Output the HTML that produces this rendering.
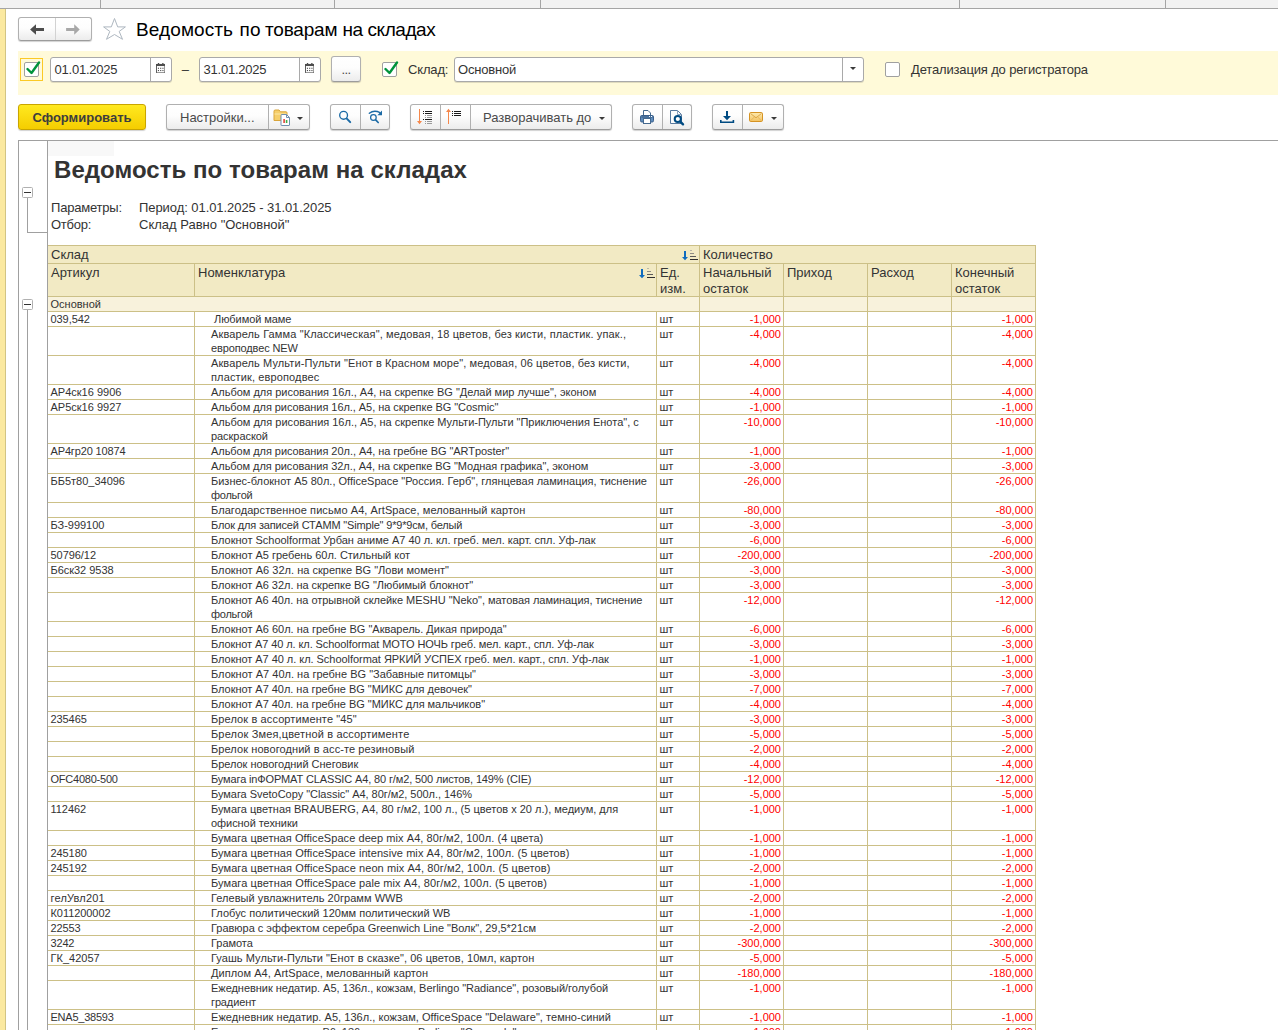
<!DOCTYPE html>
<html lang="ru">
<head>
<meta charset="utf-8">
<title>Ведомость по товарам на складах</title>
<style>
*{box-sizing:border-box;margin:0;padding:0}
html,body{width:1278px;height:1030px;overflow:hidden;background:#fff}
body{font-family:"Liberation Sans",sans-serif;font-size:13px;color:#333;position:relative}
.abs{position:absolute}
/* top strip */
#tabs{left:0;top:0;width:1278px;height:9px;background:#f2f2f2;border-bottom:1px solid #a5a5a5}
#tabs i{position:absolute;top:0;width:1px;height:8px;background:#a5a5a5}
#lstrip{left:0;top:9px;width:6px;height:1021px;background:#fbe9a0;border-right:1px solid #d2c483}
/* nav */
.btn{position:absolute;height:26px;border:1px solid #b0b0b0;border-bottom-color:#9c9c9c;border-radius:3px;background:linear-gradient(#ffffff 0%,#fdfdfd 45%,#ececec 100%);box-shadow:0 1px 1px rgba(0,0,0,.18);font-size:13px;color:#4a4a4a;line-height:25px;white-space:nowrap}
.btn .sep{position:absolute;top:0;width:1px;height:24px;background:#b0b0b0}
#title{left:136px;top:18px;font-size:19px;line-height:24px;color:#000;white-space:nowrap}
#band{left:18px;top:51px;width:1260px;height:44px;background:#fffad9}
.inp{position:absolute;height:25px;border:1px solid #a9a9a9;border-radius:3px;background:#fff;font-size:13px;line-height:23px;color:#333;white-space:nowrap;box-shadow:0 1px 0 rgba(0,0,0,.12)}
.inp .sep{position:absolute;top:0;width:1px;height:23px;background:#a9a9a9}
.chk{position:absolute;width:15px;height:15px;border:1px solid #a0a0a0;border-radius:2px;background:#fff}
.lbl{position:absolute;font-size:13px;line-height:16px;white-space:nowrap;color:#333}
/* report */
#frame{left:18px;top:140px;width:1260px;height:890px;border-left:1px solid #a0a0a0;border-top:1px solid #a0a0a0;background:#fff}
#gline{left:47px;top:141px;width:1px;height:889px;background:#a0a0a0}
.mbox{position:absolute;width:11px;height:11px;border:1px solid #b0b0b0;border-radius:1.5px;background:#fff}
.mbox:after{content:"";position:absolute;left:1px;top:4px;width:7px;height:1px;background:#333}
.gl{position:absolute;background:#a0a0a0}
#rtitle{left:54px;top:156px;letter-spacing:0.05px;font-size:24px;line-height:28px;font-weight:bold;color:#333;white-space:nowrap}
.p{position:absolute;font-size:13px;line-height:16px;color:#333;white-space:nowrap}
/* table */
#tbl{left:48px;top:245px;width:988px;font-size:11px;line-height:14px;color:#333}
.sp{display:inline-block;width:3px}
.h1,.h2,.g,.r,.r2{position:relative;width:988px;border-bottom:1px solid #ccc087}
.h1{height:19px;border-top:1px solid #ccc087;background:#f2eac4}
.h2{height:33px;background:#f2eac4}
.g{height:15px;background:#f8f2dc}
.r{height:15px}
.r2{height:29px}
.c{position:absolute;top:0;bottom:0;border-left:1px solid #ccc087;white-space:nowrap;overflow:hidden;padding:0 0 0 2.5px}
.h1 .c,.h2 .c{font-size:13px;line-height:16px;padding:1px 0 0 3px}
.a{left:0;width:146px;border-left:none}
.n{left:146px;width:462px;padding-left:16px}
.u{left:608px;width:43px}
.q1{left:651px;width:84px}
.q2{left:735px;width:84px}
.q3{left:819px;width:84px}
.q4{left:903px;width:85px;border-right:1px solid #ccc087}
.r .q1,.r .q4,.r2 .q1,.r2 .q4{text-align:right;color:#ff0000;padding-right:2px}
</style>
</head>
<body>
<div id="tabs" class="abs"><i style="left:100px"></i><i style="left:334px"></i><i style="left:540px"></i><i style="left:959px"></i><i style="left:1165px"></i></div>
<div id="lstrip" class="abs"></div>

<!-- nav buttons -->
<div class="btn" style="left:18px;top:17px;width:74px;height:24px">
  <span class="sep" style="left:36px;height:22px;background:#d2d2d2"></span>
  <svg class="abs" style="left:11px;top:5px" width="15" height="13" viewBox="0 0 15 13"><path d="M0.100 6.500 L6 1.200 L6 5 L14 5 L14 8 L6 8 L6 11.700 Z" fill="#4d4d4d"/></svg>
  <svg class="abs" style="left:47px;top:5px" width="15" height="13" viewBox="0 0 15 13"><path d="M13.700 6.500 L8.200 1.200 L8.200 5 L0.100 5 L0.100 8 L8.200 8 L8.200 11.700 Z" fill="#a8a8a8"/></svg>
</div>
<svg class="abs" style="left:102px;top:17px" width="25" height="24" viewBox="0 0 25 24"><path d="M12.5 1.5 L15.7 9.9 L23.4 9.9 L17.2 14.4 L20.5 22.3 L12.5 17.5 L4.5 22.3 L7.8 14.4 L1.6 9.9 L9.3 9.9 Z" fill="#fff" stroke="#aeb7c0" stroke-width="1" stroke-linejoin="miter"/></svg>
<div id="title" class="abs"><span class="abs" style="left:0;letter-spacing:0.1px">Ведомость</span><span class="abs" style="left:103.6px">по</span><span class="abs" style="left:129px;letter-spacing:-0.2px">товарам</span><span class="abs" style="left:206.5px;letter-spacing:-0.5px">на</span><span class="abs" style="left:231.5px;letter-spacing:-0.45px">складах</span></div>

<!-- params band -->
<div id="band" class="abs"></div>
<div class="abs" style="left:20px;top:58px;width:23px;height:23px;border:1px solid #fbc926"></div>
<div class="chk" style="left:24px;top:62px"></div>
<svg class="abs" style="left:26px;top:61px" width="15" height="15" viewBox="0 0 15 15"><path d="M1.5 8 L5.5 12 L13 1.5" fill="none" stroke="#00933b" stroke-width="2.4" stroke-linecap="round" stroke-linejoin="round"/></svg>
<div class="inp" style="left:50px;top:57px;width:122px"><span class="abs" style="left:3.5px;top:0;letter-spacing:-0.22px">01.01.2025</span><span class="sep" style="left:99px"></span><svg class="abs" style="left:105px;top:5px" width="9.4" height="10.4" viewBox="0 0 10 11"><path d="M0.5 1.5h9v9h-9z" fill="#fff" stroke="#4d4d4d"/><path d="M0 1h10v2.2H0z" fill="#4d4d4d"/><path d="M2 0h1.4v2H2zM6.6 0H8v2H6.6z" fill="#4d4d4d"/><path d="M2.2 2.2h1v.8h-1zM6.8 2.2h1v.8h-1z" fill="#fff" opacity=".0"/><g fill="#4d4d4d"><rect x="2" y="5" width="1.2" height="1.2"/><rect x="4.4" y="5" width="1.2" height="1.2"/><rect x="6.8" y="5" width="1.2" height="1.2"/><rect x="2" y="7.4" width="1.2" height="1.2"/><rect x="4.4" y="7.4" width="1.2" height="1.2"/><rect x="6.8" y="7.4" width="1.2" height="1.2"/></g></svg></div>
<div class="lbl" style="left:181.7px;top:62px">–</div>
<div class="inp" style="left:199px;top:57px;width:122px"><span class="abs" style="left:3.5px;top:0;letter-spacing:-0.22px">31.01.2025</span><span class="sep" style="left:99px"></span><svg class="abs" style="left:105px;top:5px" width="9.4" height="10.4" viewBox="0 0 10 11"><path d="M0.5 1.5h9v9h-9z" fill="#fff" stroke="#4d4d4d"/><path d="M0 1h10v2.2H0z" fill="#4d4d4d"/><path d="M2 0h1.4v2H2zM6.6 0H8v2H6.6z" fill="#4d4d4d"/><path d="M2.2 2.2h1v.8h-1zM6.8 2.2h1v.8h-1z" fill="#fff" opacity=".0"/><g fill="#4d4d4d"><rect x="2" y="5" width="1.2" height="1.2"/><rect x="4.4" y="5" width="1.2" height="1.2"/><rect x="6.8" y="5" width="1.2" height="1.2"/><rect x="2" y="7.4" width="1.2" height="1.2"/><rect x="4.4" y="7.4" width="1.2" height="1.2"/><rect x="6.8" y="7.4" width="1.2" height="1.2"/></g></svg></div>
<div class="btn" style="left:331px;top:56px;width:30px;text-align:center;letter-spacing:-0.6px">...</div>
<div class="chk" style="left:382px;top:62px"></div>
<svg class="abs" style="left:384px;top:61px" width="15" height="15" viewBox="0 0 15 15"><path d="M1.5 8 L5.5 12 L13 1.5" fill="none" stroke="#00933b" stroke-width="2.4" stroke-linecap="round" stroke-linejoin="round"/></svg>
<div class="lbl" style="left:408px;top:62px;letter-spacing:-0.15px">Склад:</div>
<div class="inp" style="left:454px;top:57px;width:410px"><span class="abs" style="left:3px;top:0;letter-spacing:-0.2px">Основной</span><span class="sep" style="left:387px"></span>
  <svg class="abs" style="left:395px;top:9px" width="6" height="3" viewBox="0 0 6 3"><path d="M0 0H6L3 3Z" fill="#3a3a3a"/></svg></div>
<div class="chk" style="left:885px;top:62px"></div>
<div class="lbl" style="left:911px;top:62px;letter-spacing:-0.155px">Детализация до регистратора</div>

<!-- toolbar -->
<div class="btn" style="left:18px;top:104px;width:128px;background:linear-gradient(#ffe920,#f5cd00);border-color:#c9a500;font-weight:bold;text-align:center;color:#3d3d3d">Сформировать</div>
<div class="btn" style="left:166px;top:104px;width:144px"><span class="abs" style="left:13px;top:0">Настройки...</span><span class="sep" style="left:101px"></span><svg class="abs" style="left:106px;top:4px" width="18" height="17" viewBox="0 0 18 17"><path d="M1 2.2 Q1 1 2.2 1 H6 L7.5 2.8 H13 Q14 2.8 14 3.8 V11.5 H1z" fill="#f6cf6a" stroke="#d9a53a" stroke-width="1"/><path d="M1.5 5h12" stroke="#fbe7a8" stroke-width="1"/><path d="M8.5 5.5h5l3 3v7.5q0 .5-.5.5h-7.5q-.5 0-.5-.5v-9.500q0-.5.500-.5z" fill="#fff" stroke="#6f8fae" stroke-width="1"/><path d="M13.500 5.500v3h3" fill="none" stroke="#6f8fae" stroke-width="1"/><rect x="10.300" y="10" width="1.600" height="4" fill="#e0453a"/><rect x="12.800" y="11" width="1.600" height="3" fill="#3fae49"/></svg>
  <svg class="abs" style="left:130px;top:12px" width="6" height="3" viewBox="0 0 6 3"><path d="M0 0H6L3 3Z" fill="#3a3a3a"/></svg></div>
<div class="btn" style="left:330px;top:104px;width:60px"><span class="sep" style="left:29px"></span><svg class="abs" style="left:0;top:0" width="58" height="24" viewBox="0 0 58 24"><g fill="none" stroke="#1b6aa5" stroke-linecap="round"><circle cx="12.600" cy="10.300" r="3.900" stroke-width="1.350"/><path d="M15.800 13.600L19.200 17.100" stroke-width="2"/><circle cx="42.400" cy="12.500" r="2.800" stroke-width="1.250"/><path d="M44.700 14.900L47.200 17.500" stroke-width="1.700"/><path d="M38.300 8.300Q43 4.500 49 7.600" stroke-width="1.350"/></g><path d="M51 5.500v4.800h-4.600z" fill="#1b6aa5"/></svg></div>
<div class="btn" style="left:410px;top:104px;width:202px"><span class="sep" style="left:29px"></span><span class="sep" style="left:59px"></span><svg class="abs" style="left:0;top:0" width="60" height="24" viewBox="0 0 60 24"><path d="M8 4h1v12h2l-2.500 3.200l-2.500-3.200h2z" fill="#f5874a"/><rect x="12" y="6" width="1" height="1" fill="#1a1a1a"/><rect x="14" y="6" width="7" height="1" fill="#1a1a1a"/><rect x="12" y="8" width="1" height="1" fill="#1a1a1a"/><rect x="14" y="8" width="7" height="1" fill="#1a1a1a"/><rect x="14" y="10" width="1" height="1" fill="#9a9a9a"/><rect x="16" y="10" width="5" height="1" fill="#9a9a9a"/><rect x="14" y="12" width="1" height="1" fill="#9a9a9a"/><rect x="16" y="12" width="5" height="1" fill="#9a9a9a"/><rect x="12" y="14" width="1" height="1" fill="#1a1a1a"/><rect x="14" y="14" width="7" height="1" fill="#1a1a1a"/><rect x="14" y="16" width="1" height="1" fill="#9a9a9a"/><rect x="16" y="16" width="5" height="1" fill="#9a9a9a"/><rect x="14" y="18" width="1" height="1" fill="#9a9a9a"/><rect x="16" y="18" width="5" height="1" fill="#9a9a9a"/><path d="M37 19h1v-12h2l-2.500-3.200l-2.500 3.200h2z" fill="#f5874a"/><rect x="41" y="6" width="1" height="1" fill="#1a1a1a"/><rect x="43" y="6" width="7" height="1" fill="#1a1a1a"/><rect x="41" y="8" width="1" height="1" fill="#1a1a1a"/><rect x="43" y="8" width="7" height="1" fill="#1a1a1a"/><rect x="41" y="10" width="1" height="1" fill="#1a1a1a"/><rect x="43" y="10" width="7" height="1" fill="#1a1a1a"/></svg><span class="abs" style="left:72px;top:0">Разворачивать до</span>
  <svg class="abs" style="left:188px;top:12px" width="6" height="3" viewBox="0 0 6 3"><path d="M0 0H6L3 3Z" fill="#3a3a3a"/></svg></div>
<div class="btn" style="left:632px;top:104px;width:60px"><span class="sep" style="left:29px"></span><svg class="abs" style="left:0;top:0" width="58" height="24" viewBox="0 0 58 24"><path d="M10.5 11V5.5H15L17.5 8V11z" fill="#fff" stroke="#44698f" stroke-width="1"/><rect x="7.5" y="10.5" width="13" height="6.500" rx="1.300" fill="#5f8cbd" stroke="#3a5f8a" stroke-width="1"/><rect x="8.5" y="11.5" width="11" height="1" fill="#33557c"/><rect x="16" y="11" width="1" height="1" fill="#fff"/><rect x="18" y="11" width="1" height="1" fill="#fff"/><rect x="10.5" y="13.5" width="7" height="5" fill="#fff" stroke="#44698f" stroke-width="1"/><path d="M37.5 5.5H44.5L48.5 9.5V18.5H37.5z" fill="#fdfdfd" stroke="#5a7a9e" stroke-width="1"/><path d="M44.5 5.5V9.5H48.5" fill="none" stroke="#8aa3bf" stroke-width="1"/><circle cx="44.8" cy="14" r="3.100" fill="#fff" stroke="#004b82" stroke-width="2"/><path d="M47.3 16.6L50 19.3" stroke="#004b82" stroke-width="2.400" stroke-linecap="round"/></svg></div>
<div class="btn" style="left:712px;top:104px;width:72px"><span class="sep" style="left:29px"></span><svg class="abs" style="left:0;top:0" width="70" height="24" viewBox="0 0 70 24"><path d="M13 6h2v5h3l-4 4.200l-4-4.200h3z" fill="#004b82"/><path d="M7.8 15v2.200h12.600v-2.200" fill="none" stroke="#004b82" stroke-width="1.600"/><defs><linearGradient id="mg" x1="0" y1="0" x2="0" y2="1"><stop offset="0" stop-color="#fdeab0"/><stop offset="1" stop-color="#f3c261"/></linearGradient></defs><rect x="36.5" y="7.5" width="13" height="9" rx="1.200" fill="url(#mg)" stroke="#d59324" stroke-width="1"/><path d="M37.5 8.5L43 12.8L48.5 8.5" fill="none" stroke="#d9a040" stroke-width="0.900"/><path d="M37.5 15.8L41.3 12M48.5 15.8L44.7 12" fill="none" stroke="#e3b050" stroke-width="0.800"/></svg>
  <svg class="abs" style="left:58px;top:12px" width="6" height="3" viewBox="0 0 6 3"><path d="M0 0H6L3 3Z" fill="#3a3a3a"/></svg></div>

<!-- report frame -->
<div id="frame" class="abs"></div>
<div id="gline" class="abs"></div>
<div class="abs" style="left:48px;top:141px;width:66px;height:15px;background:#f8f8f8"></div>
<div class="mbox" style="left:22px;top:187px"></div>
<div class="gl" style="left:27px;top:198px;width:1px;height:35px"></div>
<div class="gl" style="left:27px;top:232px;width:20px;height:1px"></div>
<div class="mbox" style="left:22px;top:299px"></div>
<div class="gl" style="left:27px;top:310px;width:1px;height:720px"></div>
<div id="rtitle" class="abs">Ведомость по товарам на складах</div>
<div class="p" style="left:51px;top:200px;letter-spacing:-0.2px">Параметры:</div>
<div class="p" style="left:139px;top:200px;letter-spacing:-0.065px">Период: 01.01.2025 - 31.01.2025</div>
<div class="p" style="left:51px;top:217px;letter-spacing:-0.25px">Отбор:</div>
<div class="p" style="left:139px;top:217px">Склад Равно "Основной"</div>

<div id="tbl" class="abs">
<div class="h1"><span class="c a" style="width:651px">Склад</span><span class="c q1" style="width:337px;border-right:1px solid #ccc087">Количество</span></div>
<div class="h2"><span class="c a">Артикул</span><span class="c n" style="padding-left:3px">Номенклатура</span><span class="c u">Ед.<br>изм.</span><span class="c q1">Начальный<br>остаток</span><span class="c q2">Приход</span><span class="c q3">Расход</span><span class="c q4">Конечный<br>остаток</span></div>
<div class="g"><span class="c a" style="width:651px">Основной</span><span class="c q1"></span><span class="c q2"></span><span class="c q3"></span><span class="c q4"></span></div>
<div class="r"><span class="c a" style="letter-spacing:-0.067px">039,542</span><span class="c n"><i class="sp"></i><span style="letter-spacing:-0.063px">Любимой маме</span></span><span class="c u">шт</span><span class="c q1">-1,000</span><span class="c q2"></span><span class="c q3"></span><span class="c q4">-1,000</span></div>
<div class="r2"><span class="c a"></span><span class="c n"><span style="letter-spacing:0.121px">Акварель Гамма "Классическая", медовая, 18 цветов, без кисти, пластик. упак.,</span><br><span style="letter-spacing:-0.123px">европодвес NEW</span></span><span class="c u">шт</span><span class="c q1">-4,000</span><span class="c q2"></span><span class="c q3"></span><span class="c q4">-4,000</span></div>
<div class="r2"><span class="c a"></span><span class="c n"><span style="letter-spacing:0.111px">Акварель Мульти-Пульти "Енот в Красном море", медовая, 06 цветов, без кисти,</span><br><span style="letter-spacing:0.132px">пластик, европодвес</span></span><span class="c u">шт</span><span class="c q1">-4,000</span><span class="c q2"></span><span class="c q3"></span><span class="c q4">-4,000</span></div>
<div class="r"><span class="c a" style="letter-spacing:0.002px">АР4ск16 9906</span><span class="c n"><span style="letter-spacing:-0.017px">Альбом для рисования 16л., А4, на скрепке BG "Делай мир лучше", эконом</span></span><span class="c u">шт</span><span class="c q1">-4,000</span><span class="c q2"></span><span class="c q3"></span><span class="c q4">-4,000</span></div>
<div class="r"><span class="c a" style="letter-spacing:0.002px">АР5ск16 9927</span><span class="c n"><span style="letter-spacing:-0.053px">Альбом для рисования 16л., А5, на скрепке BG "Cosmic"</span></span><span class="c u">шт</span><span class="c q1">-1,000</span><span class="c q2"></span><span class="c q3"></span><span class="c q4">-1,000</span></div>
<div class="r2"><span class="c a"></span><span class="c n"><span style="letter-spacing:-0.009px">Альбом для рисования 16л., А5, на скрепке Мульти-Пульти "Приключения Енота", с</span><br><span style="letter-spacing:-0.058px">раскраской</span></span><span class="c u">шт</span><span class="c q1">-10,000</span><span class="c q2"></span><span class="c q3"></span><span class="c q4">-10,000</span></div>
<div class="r"><span class="c a" style="letter-spacing:-0.139px">АР4гр20 10874</span><span class="c n"><span style="letter-spacing:-0.051px">Альбом для рисования 20л., А4, на гребне BG "ARTposter"</span></span><span class="c u">шт</span><span class="c q1">-1,000</span><span class="c q2"></span><span class="c q3"></span><span class="c q4">-1,000</span></div>
<div class="r"><span class="c a"></span><span class="c n"><span style="letter-spacing:-0.059px">Альбом для рисования 32л., А4, на скрепке BG "Модная графика", эконом</span></span><span class="c u">шт</span><span class="c q1">-3,000</span><span class="c q2"></span><span class="c q3"></span><span class="c q4">-3,000</span></div>
<div class="r2"><span class="c a" style="letter-spacing:-0.004px">ББ5т80_34096</span><span class="c n"><span style="letter-spacing:0.004px">Бизнес-блокнот А5 80л., OfficeSpace "Россия. Герб", глянцевая ламинация, тиснение</span><br><span style="letter-spacing:-0.244px">фольгой</span></span><span class="c u">шт</span><span class="c q1">-26,000</span><span class="c q2"></span><span class="c q3"></span><span class="c q4">-26,000</span></div>
<div class="r"><span class="c a"></span><span class="c n"><span style="letter-spacing:0.079px">Благодарственное письмо А4, ArtSpace, мелованный картон</span></span><span class="c u">шт</span><span class="c q1">-80,000</span><span class="c q2"></span><span class="c q3"></span><span class="c q4">-80,000</span></div>
<div class="r"><span class="c a" style="letter-spacing:-0.034px">БЗ-999100</span><span class="c n"><span style="letter-spacing:-0.171px">Блок для записей СТАММ "Simple" 9*9*9см, белый</span></span><span class="c u">шт</span><span class="c q1">-3,000</span><span class="c q2"></span><span class="c q3"></span><span class="c q4">-3,000</span></div>
<div class="r"><span class="c a"></span><span class="c n"><span style="letter-spacing:-0.016px">Блокнот Schoolformat Урбан аниме А7 40 л. кл. греб. мел. карт. спл. Уф-лак</span></span><span class="c u">шт</span><span class="c q1">-6,000</span><span class="c q2"></span><span class="c q3"></span><span class="c q4">-6,000</span></div>
<div class="r"><span class="c a" style="letter-spacing:-0.049px">50796/12</span><span class="c n"><span style="letter-spacing:-0.011px">Блокнот А5 гребень 60л. Стильный кот</span></span><span class="c u">шт</span><span class="c q1">-200,000</span><span class="c q2"></span><span class="c q3"></span><span class="c q4">-200,000</span></div>
<div class="r"><span class="c a" style="letter-spacing:-0.029px">Б6ск32 9538</span><span class="c n"><span style="letter-spacing:0.015px">Блокнот А6 32л. на скрепке BG "Лови момент"</span></span><span class="c u">шт</span><span class="c q1">-3,000</span><span class="c q2"></span><span class="c q3"></span><span class="c q4">-3,000</span></div>
<div class="r"><span class="c a"></span><span class="c n"><span style="letter-spacing:-0.027px">Блокнот А6 32л. на скрепке BG "Любимый блокнот"</span></span><span class="c u">шт</span><span class="c q1">-3,000</span><span class="c q2"></span><span class="c q3"></span><span class="c q4">-3,000</span></div>
<div class="r2"><span class="c a"></span><span class="c n"><span style="letter-spacing:-0.040px">Блокнот А6 40л. на отрывной склейке MESHU "Neko", матовая ламинация, тиснение</span><br><span style="letter-spacing:-0.244px">фольгой</span></span><span class="c u">шт</span><span class="c q1">-12,000</span><span class="c q2"></span><span class="c q3"></span><span class="c q4">-12,000</span></div>
<div class="r"><span class="c a"></span><span class="c n"><span style="letter-spacing:-0.011px">Блокнот А6 60л. на гребне BG "Акварель. Дикая природа"</span></span><span class="c u">шт</span><span class="c q1">-6,000</span><span class="c q2"></span><span class="c q3"></span><span class="c q4">-6,000</span></div>
<div class="r"><span class="c a"></span><span class="c n"><span style="letter-spacing:-0.088px">Блокнот А7 40 л. кл. Schoolformat МОТО НОЧЬ греб. мел. карт., спл. Уф-лак</span></span><span class="c u">шт</span><span class="c q1">-3,000</span><span class="c q2"></span><span class="c q3"></span><span class="c q4">-3,000</span></div>
<div class="r"><span class="c a"></span><span class="c n"><span style="letter-spacing:-0.041px">Блокнот А7 40 л. кл. Schoolformat ЯРКИЙ УСПЕХ греб. мел. карт., спл. Уф-лак</span></span><span class="c u">шт</span><span class="c q1">-1,000</span><span class="c q2"></span><span class="c q3"></span><span class="c q4">-1,000</span></div>
<div class="r"><span class="c a"></span><span class="c n"><span style="letter-spacing:0.013px">Блокнот А7 40л. на гребне BG "Забавные питомцы"</span></span><span class="c u">шт</span><span class="c q1">-3,000</span><span class="c q2"></span><span class="c q3"></span><span class="c q4">-3,000</span></div>
<div class="r"><span class="c a"></span><span class="c n"><span style="letter-spacing:-0.034px">Блокнот А7 40л. на гребне BG "МИКС для девочек"</span></span><span class="c u">шт</span><span class="c q1">-7,000</span><span class="c q2"></span><span class="c q3"></span><span class="c q4">-7,000</span></div>
<div class="r"><span class="c a"></span><span class="c n"><span style="letter-spacing:-0.033px">Блокнот А7 40л. на гребне BG "МИКС для мальчиков"</span></span><span class="c u">шт</span><span class="c q1">-4,000</span><span class="c q2"></span><span class="c q3"></span><span class="c q4">-4,000</span></div>
<div class="r"><span class="c a" style="letter-spacing:-0.086px">235465</span><span class="c n"><span style="letter-spacing:0.114px">Брелок в ассортименте "45"</span></span><span class="c u">шт</span><span class="c q1">-3,000</span><span class="c q2"></span><span class="c q3"></span><span class="c q4">-3,000</span></div>
<div class="r"><span class="c a"></span><span class="c n"><span style="letter-spacing:0.151px">Брелок Змея,цветной в ассортименте</span></span><span class="c u">шт</span><span class="c q1">-5,000</span><span class="c q2"></span><span class="c q3"></span><span class="c q4">-5,000</span></div>
<div class="r"><span class="c a"></span><span class="c n"><span style="letter-spacing:0.090px">Брелок новогодний в асс-те резиновый</span></span><span class="c u">шт</span><span class="c q1">-2,000</span><span class="c q2"></span><span class="c q3"></span><span class="c q4">-2,000</span></div>
<div class="r"><span class="c a"></span><span class="c n"><span style="letter-spacing:-0.030px">Брелок новогодний Снеговик</span></span><span class="c u">шт</span><span class="c q1">-4,000</span><span class="c q2"></span><span class="c q3"></span><span class="c q4">-4,000</span></div>
<div class="r"><span class="c a" style="letter-spacing:-0.229px">OFC4080-500</span><span class="c n"><span style="letter-spacing:-0.133px">Бумага inФОРМАТ CLASSIC А4, 80 г/м2, 500 листов, 149% (CIE)</span></span><span class="c u">шт</span><span class="c q1">-12,000</span><span class="c q2"></span><span class="c q3"></span><span class="c q4">-12,000</span></div>
<div class="r"><span class="c a"></span><span class="c n"><span style="letter-spacing:-0.038px">Бумага SvetoCopy "Classic" А4, 80г/м2, 500л., 146%</span></span><span class="c u">шт</span><span class="c q1">-5,000</span><span class="c q2"></span><span class="c q3"></span><span class="c q4">-5,000</span></div>
<div class="r2"><span class="c a" style="letter-spacing:-0.032px">112462</span><span class="c n"><span style="letter-spacing:0.001px">Бумага цветная BRAUBERG, А4, 80 г/м2, 100 л., (5 цветов х 20 л.), медиум, для</span><br><span style="letter-spacing:-0.059px">офисной техники</span></span><span class="c u">шт</span><span class="c q1">-1,000</span><span class="c q2"></span><span class="c q3"></span><span class="c q4">-1,000</span></div>
<div class="r"><span class="c a"></span><span class="c n"><span style="letter-spacing:0.063px">Бумага цветная OfficeSpace deep mix А4, 80г/м2, 100л. (4 цвета)</span></span><span class="c u">шт</span><span class="c q1">-1,000</span><span class="c q2"></span><span class="c q3"></span><span class="c q4">-1,000</span></div>
<div class="r"><span class="c a" style="letter-spacing:-0.086px">245180</span><span class="c n"><span style="letter-spacing:0.078px">Бумага цветная OfficeSpace intensive mix А4, 80г/м2, 100л. (5 цветов)</span></span><span class="c u">шт</span><span class="c q1">-1,000</span><span class="c q2"></span><span class="c q3"></span><span class="c q4">-1,000</span></div>
<div class="r"><span class="c a" style="letter-spacing:-0.086px">245192</span><span class="c n"><span style="letter-spacing:0.083px">Бумага цветная OfficeSpace neon mix А4, 80г/м2, 100л. (5 цветов)</span></span><span class="c u">шт</span><span class="c q1">-2,000</span><span class="c q2"></span><span class="c q3"></span><span class="c q4">-2,000</span></div>
<div class="r"><span class="c a"></span><span class="c n"><span style="letter-spacing:0.085px">Бумага цветная OfficeSpace pale mix А4, 80г/м2, 100л. (5 цветов)</span></span><span class="c u">шт</span><span class="c q1">-1,000</span><span class="c q2"></span><span class="c q3"></span><span class="c q4">-1,000</span></div>
<div class="r"><span class="c a" style="letter-spacing:0.179px">гелУвл201</span><span class="c n"><span style="letter-spacing:0.051px">Гелевый увлажнитель 20грамм WWB</span></span><span class="c u">шт</span><span class="c q1">-2,000</span><span class="c q2"></span><span class="c q3"></span><span class="c q4">-2,000</span></div>
<div class="r"><span class="c a" style="letter-spacing:-0.066px">К011200002</span><span class="c n"><span style="letter-spacing:0.024px">Глобус политический 120мм политический WB</span></span><span class="c u">шт</span><span class="c q1">-1,000</span><span class="c q2"></span><span class="c q3"></span><span class="c q4">-1,000</span></div>
<div class="r"><span class="c a" style="letter-spacing:-0.119px">22553</span><span class="c n"><span style="letter-spacing:-0.017px">Гравюра с эффектом серебра Greenwich Line "Волк", 29,5*21см</span></span><span class="c u">шт</span><span class="c q1">-2,000</span><span class="c q2"></span><span class="c q3"></span><span class="c q4">-2,000</span></div>
<div class="r"><span class="c a" style="letter-spacing:-0.171px">3242</span><span class="c n"><span style="letter-spacing:-0.035px">Грамота</span></span><span class="c u">шт</span><span class="c q1">-300,000</span><span class="c q2"></span><span class="c q3"></span><span class="c q4">-300,000</span></div>
<div class="r"><span class="c a" style="letter-spacing:0.015px">ГК_42057</span><span class="c n"><span style="letter-spacing:0.070px">Гуашь Мульти-Пульти "Енот в сказке", 06 цветов, 10мл, картон</span></span><span class="c u">шт</span><span class="c q1">-5,000</span><span class="c q2"></span><span class="c q3"></span><span class="c q4">-5,000</span></div>
<div class="r"><span class="c a"></span><span class="c n"><span style="letter-spacing:0.056px">Диплом А4, ArtSpace, мелованный картон</span></span><span class="c u">шт</span><span class="c q1">-180,000</span><span class="c q2"></span><span class="c q3"></span><span class="c q4">-180,000</span></div>
<div class="r2"><span class="c a"></span><span class="c n"><span style="letter-spacing:-0.033px">Ежедневник недатир. А5, 136л., кожзам, Berlingo "Radiance", розовый/голубой</span><br><span style="letter-spacing:-0.131px">градиент</span></span><span class="c u">шт</span><span class="c q1">-1,000</span><span class="c q2"></span><span class="c q3"></span><span class="c q4">-1,000</span></div>
<div class="r"><span class="c a" style="letter-spacing:-0.235px">ENA5_38593</span><span class="c n"><span style="letter-spacing:0.039px">Ежедневник недатир. А5, 136л., кожзам, OfficeSpace "Delaware", темно-синий</span></span><span class="c u">шт</span><span class="c q1">-1,000</span><span class="c q2"></span><span class="c q3"></span><span class="c q4">-1,000</span></div>
<div class="r"><span class="c a"></span><span class="c n"><span style="letter-spacing:-0.063px">Ежедневник недатир. В6, 136л., кожзам, Berlingo "Coronado"</span></span><span class="c u">шт</span><span class="c q1">-1,000</span><span class="c q2"></span><span class="c q3"></span><span class="c q4">-1,000</span></div></div>
<svg class="abs" style="left:682px;top:250px" width="17" height="11" viewBox="0 0 17 11"><path d="M2 1h2v6h2l-3 3.2L0 7h2z" fill="#0f6cbf"/><path d="M8 0.5h2" stroke="#b9b6a8" stroke-width="1"/><path d="M8 3.5h4" stroke="#8f8d85" stroke-width="1"/><path d="M8 6.5h6" stroke="#5a5a58" stroke-width="1"/><path d="M8 9.5h8" stroke="#2e2e2e" stroke-width="1"/></svg>
<svg class="abs" style="left:639px;top:268px" width="17" height="11" viewBox="0 0 17 11"><path d="M2 1h2v6h2l-3 3.2L0 7h2z" fill="#0f6cbf"/><path d="M8 0.5h2" stroke="#b9b6a8" stroke-width="1"/><path d="M8 3.5h4" stroke="#8f8d85" stroke-width="1"/><path d="M8 6.5h6" stroke="#5a5a58" stroke-width="1"/><path d="M8 9.5h8" stroke="#2e2e2e" stroke-width="1"/></svg>
</body>
</html>
